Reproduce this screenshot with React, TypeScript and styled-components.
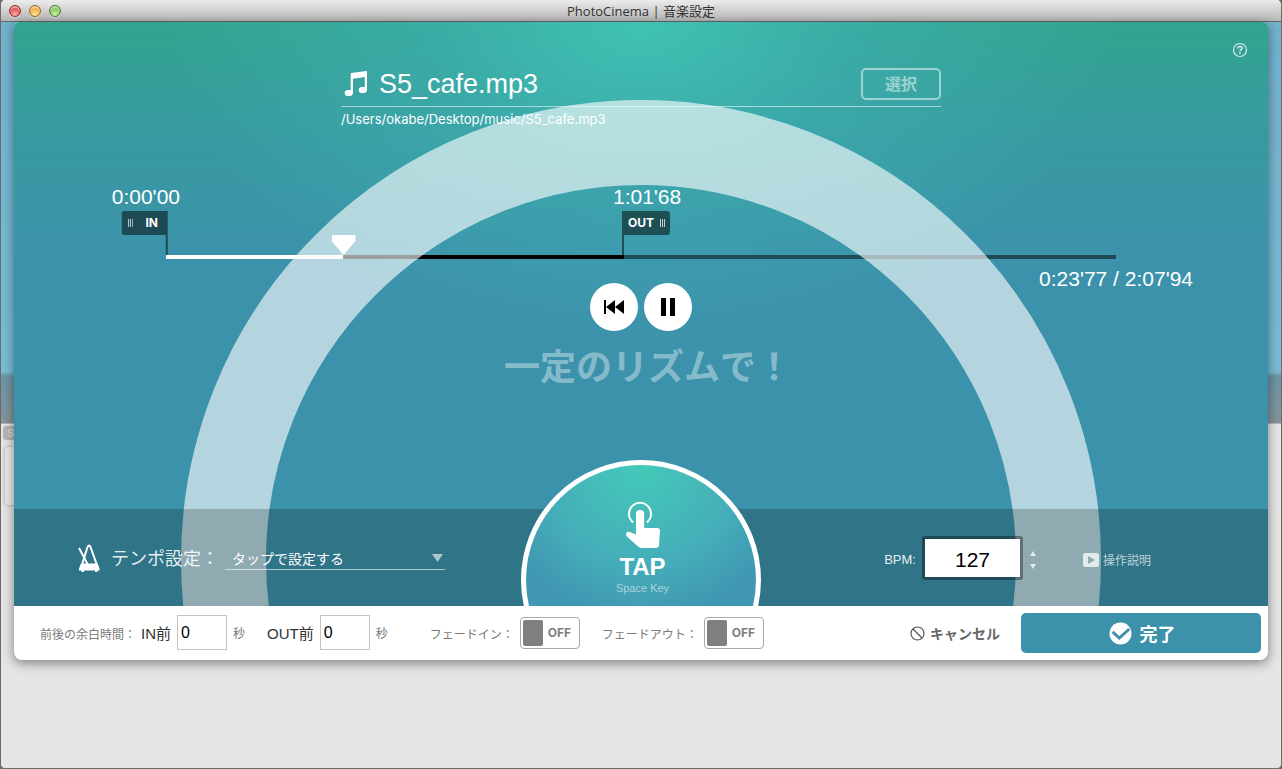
import React, { useState } from "react";
import styled, { createGlobalStyle } from "styled-components";

const LATIN = `"Liberation Sans", "Noto Sans CJK JP", sans-serif`;
const ROUND = `Inter, "Noto Sans CJK JP", sans-serif`;
const TEAL = "#3c92ab";

const TOTAL = 127.94;
const OUT_POINT = 61.68;
const POSITION = 23.77;

const GlobalStyle = createGlobalStyle`
  * { box-sizing: border-box; }
  body { margin: 0; background: #6a6a6a; font-family: ${LATIN}; }
  button, input, select { font-family: inherit; margin: 0; }
  button { border: 0; padding: 0; background: none; cursor: pointer; }
`;

const Window = styled.div`
  display: flex;
  flex-direction: column;
  min-height: 100vh;
  border: 1px solid #6a6a6a;
  border-top: 0;
  border-radius: 5px;
  background: #e5e5e5;
  overflow: hidden;
`;

const TitleBar = styled.header`
  position: relative;
  display: flex;
  align-items: center;
  justify-content: center;
  height: 22px;
  border-bottom: 1px solid #686868;
  background: linear-gradient(#ececec, #d6d6d6 40%, #b6b6b6);
`;

const Title = styled.h1`
  margin: 0;
  font: 400 13px/20px "Open Sans", "Noto Sans CJK JP", sans-serif;
  color: #333;
`;

const Lights = styled.div`
  position: absolute;
  left: 8px;
  top: 5px;
  display: flex;
  gap: 8px;
`;

const Light = styled.button<{ $rim: string; $core: string; $glow: string }>`
  width: 12px;
  height: 12px;
  border: 1px solid ${(p) => p.$rim};
  border-radius: 50%;
  background: radial-gradient(circle at 50% 85%, ${(p) => p.$glow}, ${(p) => p.$core} 65%);
  box-shadow: inset 0 2px 1px rgba(255, 255, 255, 0.5), 0 1px 0 rgba(255, 255, 255, 0.5);
`;

const Body = styled.main`
  position: relative;
  flex: 1;
  padding: 0 13px 16px;
`;

const Backdrop = styled.div`
  position: absolute;
  inset: 0 0 auto 0;
  height: 402px;
  background: linear-gradient(#73b2cf, #79bdd6 350px, #6d95a5 354px, #84959d 400px);
  border-bottom: 1px solid #b5b5b5;
`;

const BackTab = styled.div`
  position: absolute;
  left: 2px;
  top: 404px;
  width: 20px;
  height: 14px;
  border-radius: 3px;
  background: #b5b5b5;
  color: #d5d5d5;
  font: 700 11px/14px ${LATIN};
  padding-left: 4px;
`;

const BackPanel = styled.div`
  position: absolute;
  left: 2px;
  top: 423px;
  width: 40px;
  height: 62px;
  border: 2px solid #d2d2d2;
  border-radius: 5px;
  background: #e9e9e9;
`;

const Sheet = styled.section`
  position: relative;
  border-radius: 5px 5px 8px 8px;
  background: #fff;
  box-shadow: 0 3px 12px rgba(0, 0, 0, 0.45);
  overflow: hidden;
`;

const Stage = styled.div`
  position: relative;
  overflow: hidden;
  display: flex;
  flex-direction: column;
  padding-top: 46px;
  color: #fff;
  background:
    radial-gradient(ellipse 470px 320px at 50% 0, #40c2b4, rgba(64, 178, 180, 0.55) 45%, rgba(60, 146, 171, 0) 100%),
    linear-gradient(#32a48e, #379aa0 110px, #3c92ab 240px);
`;

const Ring = styled.div`
  position: absolute;
  z-index: 1;
  left: 50%;
  top: 78px;
  width: 920px;
  height: 920px;
  transform: translateX(-50%);
  border: 85px solid rgba(255, 255, 255, 0.62);
  border-radius: 50%;
  pointer-events: none;
`;

const HelpButton = styled.button`
  position: absolute;
  right: 20px;
  top: 20px;
  width: 16px;
  height: 16px;
  display: flex;
`;

const Song = styled.div`
  position: relative;
  z-index: 2;
  width: 600px;
  align-self: center;
`;

const SongRow = styled.div`
  display: flex;
  align-items: center;
  gap: 11px;
  height: 39px;
  padding: 0 0 6px 3px;
  border-bottom: 1px solid rgba(255, 255, 255, 0.55);
`;

const SongName = styled.h2`
  flex: 1;
  margin: 0;
  font: 400 27px/32px ${LATIN};
`;

const SelectButton = styled.button`
  width: 80px;
  height: 32px;
  padding-top: 1px;
  border: 2px solid rgba(255, 255, 255, 0.5);
  border-radius: 5px;
  color: rgba(255, 255, 255, 0.5);
  font-size: 16px;
  font-weight: 700;
  line-height: 27px;
`;

const SongPath = styled.p`
  margin: 0;
  font: 400 13px/24px ${ROUND};
`;

const Timeline = styled.div`
  position: relative;
  height: 74px;
  margin: 54px 152px 0;
`;

const Track = styled.div`
  position: absolute;
  inset: auto 0 0 0;
  height: 4px;
  background: rgba(0, 0, 0, 0.5);
`;

const Segment = styled.div<{ $color: string }>`
  position: absolute;
  top: 0;
  bottom: 0;
  background: ${(p) => p.$color};
`;

const Marker = styled.div<{ $side: "in" | "out" }>`
  position: absolute;
  top: 0;
  bottom: 4px;
  display: flex;
  flex-direction: column;
  gap: 2px;
  ${(p) => (p.$side === "in" ? "transform: translateX(-100%); margin-left: 2px; align-items: flex-end;" : "margin-left: -2px;")}
`;

const MarkerTime = styled.span<{ $side: "in" | "out" }>`
  font-size: 21px;
  line-height: 24px;
  ${(p) => (p.$side === "in" ? "margin-right: -12px;" : "margin-left: -9px;")}
`;

const Flag = styled.button<{ $side: "in" | "out" }>`
  position: relative;
  display: flex;
  align-items: center;
  justify-content: space-between;
  width: ${(p) => (p.$side === "in" ? 46 : 48)}px;
  height: 24px;
  padding: ${(p) => (p.$side === "in" ? "0 10px 0 6px" : "0 5px 0 6px")};
  border-radius: ${(p) => (p.$side === "in" ? "3px 0 0 3px" : "0 3px 3px 0")};
  background: rgba(0, 0, 0, 0.5);
  color: #fff;
  font: 700 12px/24px ${ROUND};

  &::after {
    content: "";
    position: absolute;
    top: 24px;
    ${(p) => (p.$side === "in" ? "right: 0;" : "left: 0;")}
    width: 2px;
    height: 20px;
    background: rgba(0, 0, 0, 0.5);
  }
`;

const Grip = styled.span`
  width: 5px;
  height: 8px;
  background: repeating-linear-gradient(90deg, rgba(255, 255, 255, 0.7) 0 1px, transparent 1px 2px);
`;

const Playhead = styled.input`
  position: absolute;
  left: -11px;
  bottom: 4px;
  width: calc(100% + 24px);
  height: 20px;
  appearance: none;
  background: none;
  pointer-events: none;

  &::-webkit-slider-thumb {
    appearance: none;
    width: 24px;
    height: 20px;
    background: #fff;
    clip-path: polygon(0 0, 100% 0, 100% 30%, 50% 100%, 0 30%);
    pointer-events: auto;
  }
`;

const Transport = styled.div`
  position: relative;
  z-index: 2;
  display: grid;
  grid-template-columns: 1fr auto 1fr;
  align-items: start;
  padding: 8px 75px 0;
`;

const Controls = styled.div`
  grid-column: 2;
  display: flex;
  gap: 6px;
  padding-top: 16px;
`;

const RoundButton = styled.button`
  display: flex;
  align-items: center;
  justify-content: center;
  width: 48px;
  height: 48px;
  border-radius: 50%;
  background: #fff;
`;

const Readout = styled.span`
  justify-self: end;
  font-size: 21px;
  line-height: 24px;
`;

const Hint = styled.p`
  position: relative;
  z-index: 2;
  margin: 13px 0 0;
  padding: 0 0 117px 14px;
  font-size: 36px;
  font-weight: 700;
  line-height: 48px;
  text-align: center;
  color: rgba(255, 255, 255, 0.4);
`;

const TempoBar = styled.div`
  position: relative;
  z-index: 2;
  display: flex;
  align-items: center;
  justify-content: space-between;
  height: 97px;
  padding: 0 117px 0 64px;
  background: rgba(0, 0, 0, 0.2);
`;

const TempoGroup = styled.div`
  display: flex;
  align-items: center;
`;

const TempoLabel = styled.label`
  margin-left: 8px;
  width: 114px;
  padding-top: 2px;
  font-size: 18px;
  line-height: 28px;
  color: rgba(255, 255, 255, 0.9);
`;

const SelectBox = styled.div`
  position: relative;
  display: flex;
  align-items: center;

  & > svg {
    position: absolute;
    right: 2px;
    pointer-events: none;
  }
`;

const TempoSelect = styled.select`
  appearance: none;
  width: 220px;
  height: 24px;
  padding: 4px 20px 0 7px;
  border: 0;
  border-bottom: 1px solid rgba(255, 255, 255, 0.6);
  border-radius: 0;
  background: none;
  color: #fff;
  font-size: 14px;
`;

const TapButton = styled.button`
  position: absolute;
  left: 50%;
  top: -49px;
  display: flex;
  flex-direction: column;
  align-items: center;
  width: 240px;
  height: 240px;
  padding: 37px 0 0 3px;
  transform: translateX(-50%);
  border: 5px solid #fff;
  border-radius: 50%;
  background: radial-gradient(circle 150px at 50% 0, #44cab9, #45aeb9 65%, #4098b2 100%);
  color: #fff;
`;

const TapTitle = styled.span`
  margin-top: 5px;
  font-size: 24px;
  font-weight: 700;
  line-height: 28px;
`;

const TapKey = styled.span`
  font-size: 11px;
  line-height: 14px;
  color: rgba(255, 255, 255, 0.55);
`;

const BpmLabel = styled.label`
  margin-right: 6px;
  padding-top: 4px;
  font-size: 13px;
  color: rgba(255, 255, 255, 0.9);
`;

const BpmInput = styled.input`
  width: 101px;
  height: 44px;
  padding: 4px 0 0;
  border: 3px solid rgba(0, 0, 0, 0.35);
  border-radius: 3px;
  background: #fff;
  background-clip: padding-box;
  font-size: 21px;
  text-align: center;
  color: #000;
`;

const Stepper = styled.div`
  display: flex;
  flex-direction: column;
  gap: 2px;
  margin: 0 44px 0 4px;
  padding-top: 4px;
`;

const StepButton = styled.button`
  display: flex;
  align-items: center;
  justify-content: center;
  width: 12px;
  height: 11px;
`;

const GuideLink = styled.a`
  display: flex;
  align-items: center;
  gap: 4px;
  padding-top: 4px;
  color: rgba(255, 255, 255, 0.7);
  font-size: 12px;
  text-decoration: none;
`;

const Footer = styled.footer`
  display: flex;
  align-items: center;
  height: 54px;
  padding: 0 7px 0 26px;
  color: #7a7a7a;
  font-size: 12px;
`;

const Caption = styled.span`
  margin-right: 5px;
`;

const MarginField = styled.label`
  display: flex;
  align-items: center;
  gap: 6px;
  margin-right: 22px;
  padding-bottom: 1px;
`;

const FieldName = styled.span`
  font-size: 15px;
  color: #333;
`;

const SecondsInput = styled.input`
  width: 50px;
  height: 35px;
  padding: 1px 3px 0;
  border: 1px solid #c4c4c4;
  background: #fff;
  color: #000;
  font-size: 16px;
`;

const Fades = styled.div`
  display: flex;
  gap: 22px;
  margin-left: 20px;
`;

const FadeField = styled.label`
  display: flex;
  align-items: center;
  gap: 6px;
`;

const Toggle = styled.span`
  display: flex;
  align-items: center;
  gap: 5px;
  width: 60px;
  height: 32px;
  padding: 0 2px;
  border: 1px solid #a8a8a8;
  border-radius: 4px;
  color: #808080;
  font: 700 12px/30px ${ROUND};
`;

const ToggleKnob = styled.input`
  appearance: none;
  width: 20px;
  height: 26px;
  border-radius: 2px;
  background: #808080;
`;

const CancelButton = styled.button`
  display: flex;
  align-items: center;
  gap: 5px;
  margin: 0 21px 0 auto;
  color: #666;
  font-size: 14px;
  font-weight: 700;
`;

const DoneButton = styled.button`
  display: flex;
  align-items: center;
  justify-content: center;
  gap: 8px;
  width: 240px;
  height: 40px;
  padding-left: 2px;
  border-radius: 5px;
  background: ${TEAL};
  color: #fff;
  font-size: 18px;
  font-weight: 700;
`;

const NoteIcon = () => (
  <svg width="24" height="26" viewBox="0 0 24 26" fill="#fff" aria-hidden="true">
    <path d="M6.7 2.4Q6.7 2 7.2 1.9L22.4 0Q23 0 23 .6V18.600Q23 22 19.500 22H17.500Q14.700 22 14.700 19Q14.700 16 17.800 16H20.800V6L9 7.800V21.600Q9 25 5.500 25H3.500Q.7 25 .7 22Q.7 19 3.800 19H6.700Z" />
  </svg>
);

const HelpIcon = () => (
  <svg width="16" height="16" viewBox="0 0 16 16" fill="none" stroke="#fff" strokeOpacity=".8" aria-hidden="true">
    <circle cx="8" cy="8" r="6.500" strokeWidth="1.200" />
    <path d="M5.900 6.600C5.900 5.200 6.800 4.500 8 4.500S10.100 5.200 10.100 6.300C10.100 7.600 8 7.600 8 9.300" strokeWidth="1.500" />
    <path d="M8 10.300V11.900" strokeWidth="1.600" />
  </svg>
);

const RewindIcon = () => (
  <svg width="20" height="14" viewBox="0 0 20 14" aria-hidden="true">
    <path d="M0 0H2V14H0ZM11 0V14L2 7ZM20 0V14L11 7Z" />
  </svg>
);

const PauseIcon = () => (
  <svg width="14" height="18" viewBox="0 0 14 18" aria-hidden="true">
    <path d="M0 0H5V18H0ZM9 0H14V18H9Z" />
  </svg>
);

const MetronomeIcon = () => (
  <svg width="25" height="29" viewBox="0 0 25 29" fill="none" stroke="#fff" strokeWidth="2" aria-hidden="true">
    <path d="M3 25L9.500 4Q11 .8 12.500 4L20 25" strokeLinejoin="round" />
    <path d="M1 5L9.500 21" />
    <path d="M3 20.500H19.500L21.500 25.500V27.500H19.500V29H17V27.500H6V29H3.500V27.500H1V25.500Z" fill="#fff" stroke="none" />
  </svg>
);

const HandIcon = () => (
  <svg width="34" height="46" viewBox="0 0 34 46" fill="#fff" aria-hidden="true">
    <path d="M7.200 20.500A11 11 0 1 1 20.800 20.500" fill="none" stroke="#fff" strokeWidth="2" />
    <path d="M10 12A4.100 4.100 0 0 1 18.200 12V26H31.500Q34 26 34 28.500L33 43Q32.800 46 30 46H15.500Q13.500 46 12 44.600L1 34.500Q0 33.500 0 31.500Q.8 29.300 3.500 30L10 32.600Z" />
  </svg>
);

const ChevronDown = () => (
  <svg width="11" height="8" viewBox="0 0 11 8" fill="#fff" fillOpacity=".6" aria-hidden="true">
    <path d="M0 0H11L5.500 8Z" />
  </svg>
);

const PlayBadge = () => (
  <svg width="16" height="14" viewBox="0 0 16 14" fill="#fff" fillOpacity=".75" aria-hidden="true">
    <path fillRule="evenodd" d="M2.500 0H13.500Q16 0 16 2.500V11.500Q16 14 13.500 14H2.500Q0 14 0 11.500V2.500Q0 0 2.500 0ZM5 3V11L12 7Z" />
  </svg>
);

const CancelIcon = () => (
  <svg width="15" height="15" viewBox="0 0 15 15" fill="none" stroke="#555" strokeWidth="1.200" aria-hidden="true">
    <circle cx="7.500" cy="7.500" r="6.500" />
    <path d="M3 3L12 12" />
  </svg>
);

const CheckIcon = () => (
  <svg width="23" height="23" viewBox="0 0 23 23" aria-hidden="true">
    <circle cx="11.500" cy="11.500" r="11" fill="#fff" />
    <path d="M3.600 9.800L10.300 16L20.300 7" fill="none" stroke={TEAL} strokeWidth="3" />
  </svg>
);

const percent = (seconds: number) => `${(seconds / TOTAL) * 100}%`;

export default function App() {
  const [position, setPosition] = useState(POSITION);
  const [bpm, setBpm] = useState(127);

  return (
    <>
      <GlobalStyle />
      <Window>
        <TitleBar>
          <Lights>
            <Light aria-label="Close" $rim="#8f2f2f" $core="#e0484a" $glow="#ffb0a8" />
            <Light aria-label="Minimize" $rim="#96682a" $core="#eda63c" $glow="#ffe9a0" />
            <Light aria-label="Zoom" $rim="#4d7a38" $core="#7cbf58" $glow="#d0f5a8" />
          </Lights>
          <Title>PhotoCinema | 音楽設定</Title>
        </TitleBar>
        <Body>
          <Backdrop />
          <BackTab aria-hidden="true">S</BackTab>
          <BackPanel />
          <Sheet>
            <Stage>
              <Ring />
              <HelpButton aria-label="ヘルプ"><HelpIcon /></HelpButton>
              <Song>
                <SongRow>
                  <NoteIcon />
                  <SongName>S5_cafe.mp3</SongName>
                  <SelectButton>選択</SelectButton>
                </SongRow>
                <SongPath>/Users/okabe/Desktop/music/S5_cafe.mp3</SongPath>
              </Song>

              <Timeline>
                <Track>
                  <Segment $color="#000" style={{ left: 0, width: percent(OUT_POINT) }} />
                  <Segment $color="#fff" style={{ left: 0, width: percent(position) }} />
                </Track>
                <Marker $side="in" style={{ left: 0 }}>
                  <MarkerTime $side="in">0:00'00</MarkerTime>
                  <Flag $side="in"><Grip />IN</Flag>
                </Marker>
                <Marker $side="out" style={{ left: percent(OUT_POINT) }}>
                  <MarkerTime $side="out">1:01'68</MarkerTime>
                  <Flag $side="out">OUT<Grip /></Flag>
                </Marker>
                <Playhead
                  type="range"
                  aria-label="再生位置"
                  min={0}
                  max={TOTAL}
                  step={0.01}
                  value={position}
                  onChange={(e) => setPosition(Number(e.target.value))}
                />
              </Timeline>

              <Transport>
                <Controls>
                  <RoundButton aria-label="先頭へ"><RewindIcon /></RoundButton>
                  <RoundButton aria-label="一時停止"><PauseIcon /></RoundButton>
                </Controls>
                <Readout>0:23'77 / 2:07'94</Readout>
              </Transport>
              <Hint>一定のリズムで！</Hint>

              <TempoBar>
                <TempoGroup>
                  <MetronomeIcon />
                  <TempoLabel htmlFor="tempo">テンポ設定：</TempoLabel>
                  <SelectBox>
                    <TempoSelect id="tempo">
                      <option>タップで設定する</option>
                    </TempoSelect>
                    <ChevronDown />
                  </SelectBox>
                </TempoGroup>
                <TapButton>
                  <HandIcon />
                  <TapTitle>TAP</TapTitle>
                  <TapKey>Space Key</TapKey>
                </TapButton>
                <TempoGroup>
                  <BpmLabel htmlFor="bpm">BPM:</BpmLabel>
                  <BpmInput id="bpm" value={bpm} onChange={(e) => setBpm(Number(e.target.value) || 0)} />
                  <Stepper>
                    <StepButton aria-label="上げる" onClick={() => setBpm(bpm + 1)}>
                      <svg width="6" height="5" viewBox="0 0 6 5" fill="#fff" fillOpacity=".75"><path d="M0 5H6L3 0Z" /></svg>
                    </StepButton>
                    <StepButton aria-label="下げる" onClick={() => setBpm(bpm - 1)}>
                      <svg width="6" height="5" viewBox="0 0 6 5" fill="#fff" fillOpacity=".75"><path d="M0 0H6L3 5Z" /></svg>
                    </StepButton>
                  </Stepper>
                  <GuideLink href="#guide"><PlayBadge />操作説明</GuideLink>
                </TempoGroup>
              </TempoBar>
            </Stage>

            <Footer>
              <Caption>前後の余白時間：</Caption>
              <MarginField>
                <FieldName>IN前</FieldName>
                <SecondsInput defaultValue="0" />
                秒
              </MarginField>
              <MarginField>
                <FieldName>OUT前</FieldName>
                <SecondsInput defaultValue="0" />
                秒
              </MarginField>
              <Fades>
                <FadeField>
                  フェードイン：
                  <Toggle><ToggleKnob type="checkbox" />OFF</Toggle>
                </FadeField>
                <FadeField>
                  フェードアウト：
                  <Toggle><ToggleKnob type="checkbox" />OFF</Toggle>
                </FadeField>
              </Fades>
              <CancelButton><CancelIcon />キャンセル</CancelButton>
              <DoneButton><CheckIcon />完了</DoneButton>
            </Footer>
          </Sheet>
        </Body>
      </Window>
    </>
  );
}
